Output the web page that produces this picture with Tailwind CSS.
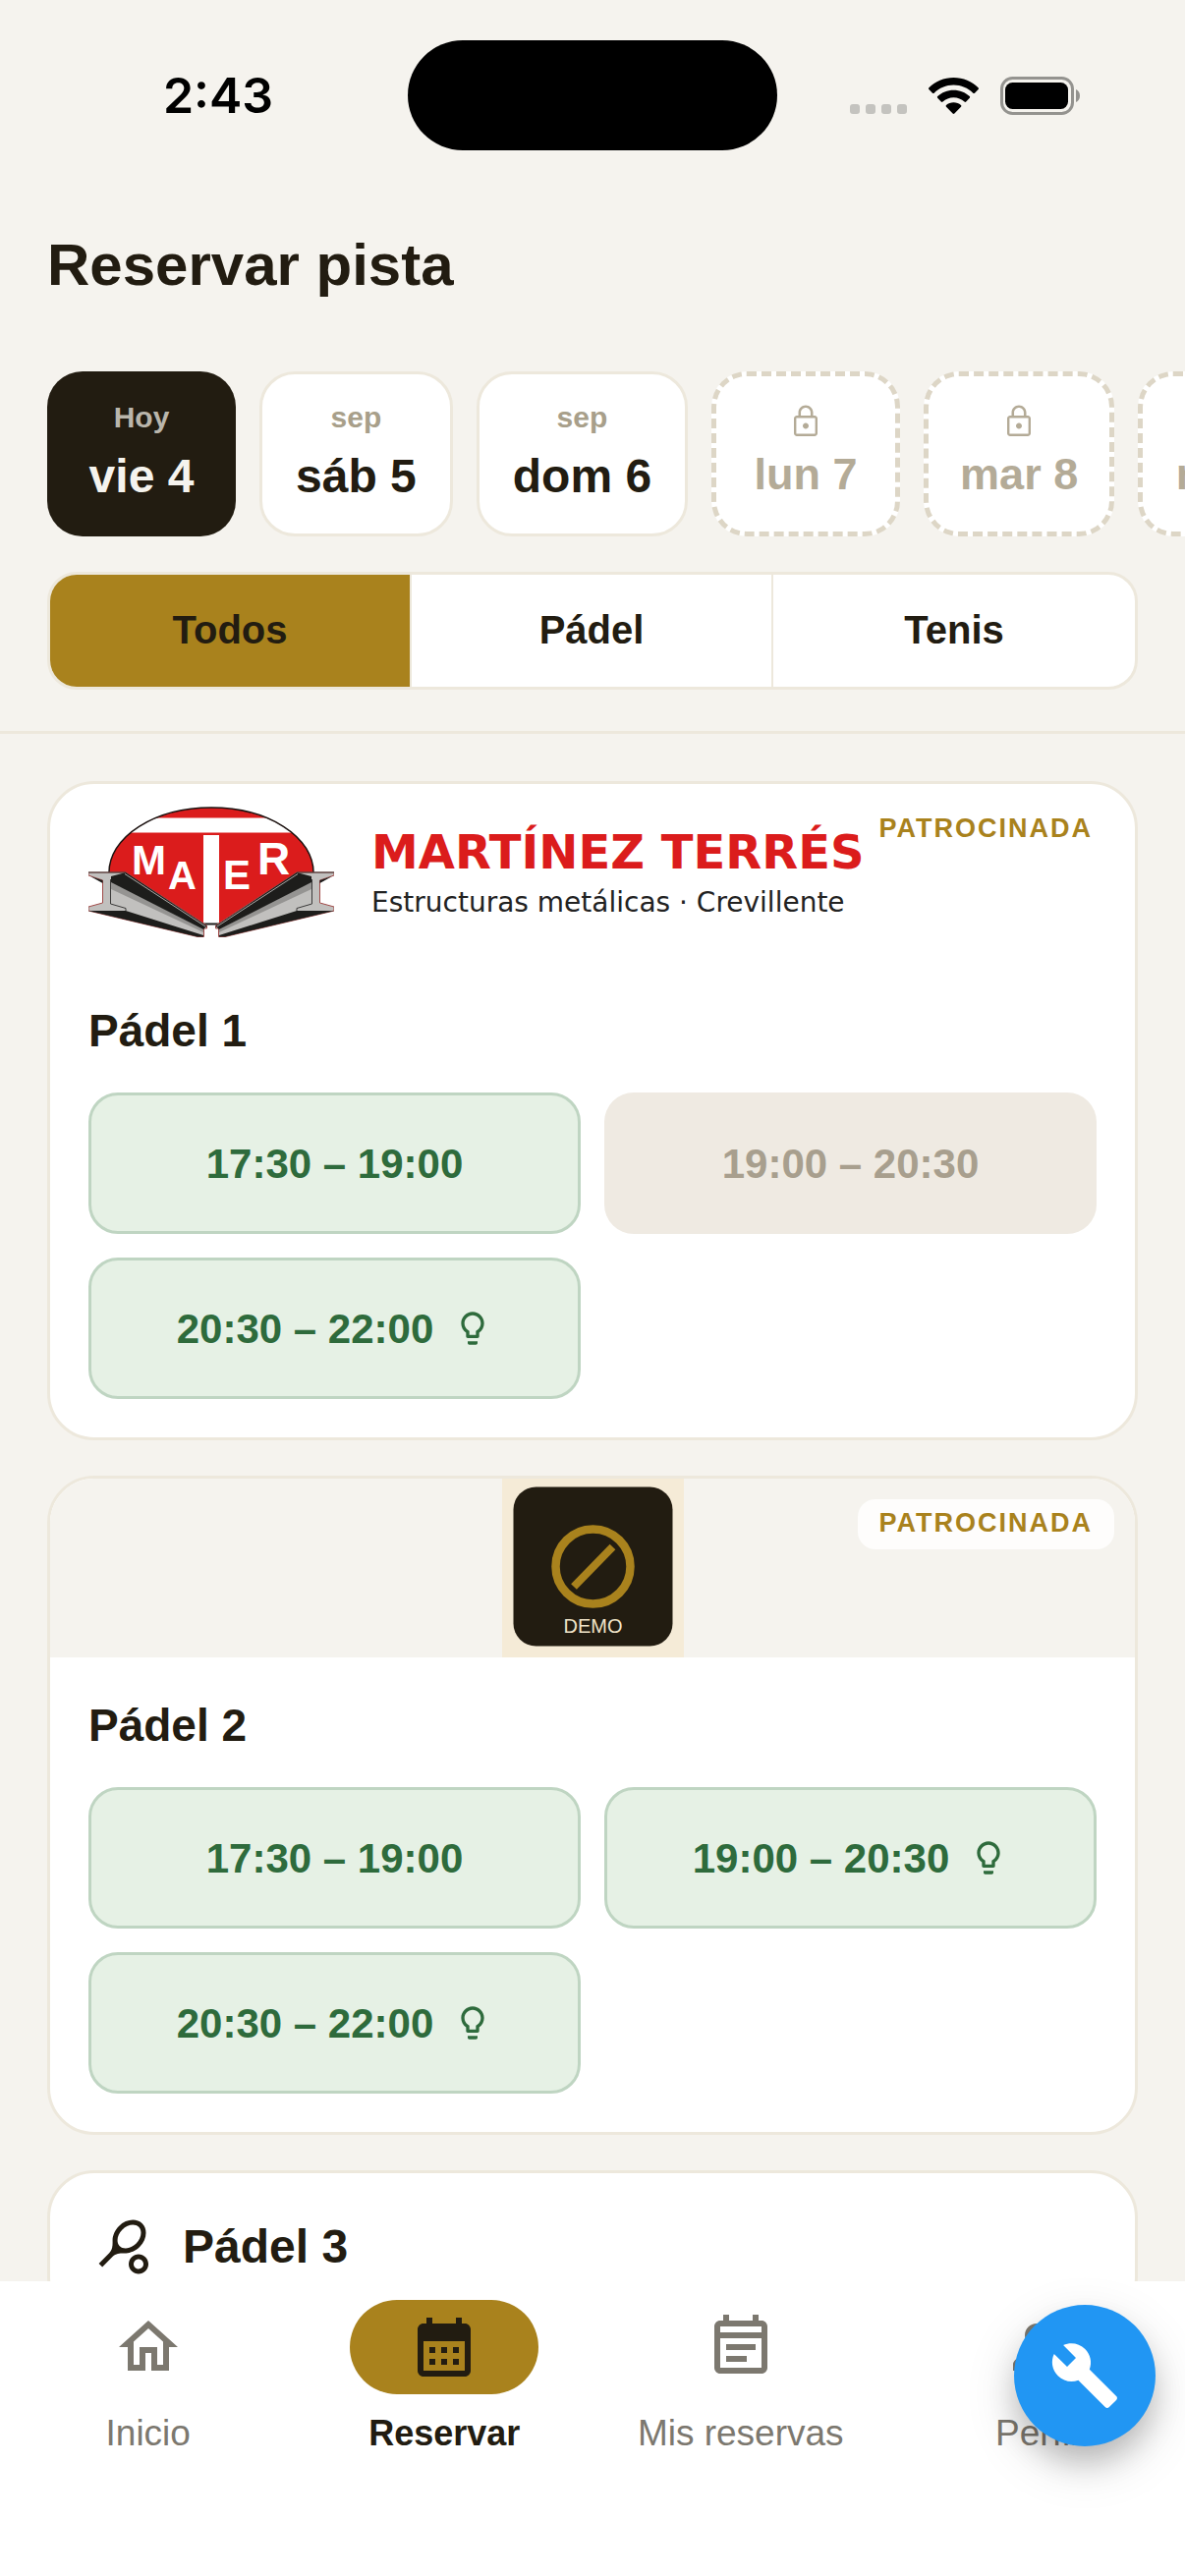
<!DOCTYPE html>
<html lang="es">
<head>
  <meta charset="UTF-8">
  <meta name="viewport" content="width=device-width, initial-scale=1.0">
  <title>Reservar pista</title>
  <script src="https://cdn.jsdelivr.net/npm/@tailwindcss/browser@4"></script>
</head>
<body class="bg-[#f5f3ee] font-['Liberation_Sans',Arial,sans-serif] text-[#221c11]">

  <!-- Shared icons -->
  <svg class="hidden">
    <symbol id="icon-lock" viewBox="0 0 24 24">
      <path fill-rule="evenodd" d="M18 8h-1V6c0-2.760-2.240-5-5-5S7 3.240 7 6v2H6c-1.100 0-2 .9-2 2v10c0 1.100.9 2 2 2h12c1.100 0 2-.9 2-2V10c0-1.100-.9-2-2-2zM8.700 6c0-1.800 1.500-3.300 3.300-3.300s3.300 1.500 3.300 3.300v2H8.700V6zM18.400 20.400H5.600V9.600h12.800v10.800zM12 17c1.100 0 2-.9 2-2s-.9-2-2-2-2 .9-2 2 .9 2 2 2z"/>
    </symbol>
    <symbol id="icon-bulb" viewBox="0 0 24 24">
      <path d="M9 21c0 .55.45 1 1 1h4c.55 0 1-.45 1-1v-1H9v1zm3-19C8.140 2 5 5.140 5 9c0 2.380 1.190 4.470 3 5.740V17c0 .55.45 1 1 1h6c.55 0 1-.45 1-1v-2.260c1.810-1.270 3-3.360 3-5.740 0-3.860-3.140-7-7-7zm2.850 11.100l-.85.6V16h-4v-2.300l-.85-.6C7.800 12.160 7 10.630 7 9c0-2.760 2.240-5 5-5s5 2.240 5 5c0 1.630-.8 3.160-2.150 4.100z"/>
    </symbol>
  </svg>

  <div class="flex h-screen flex-col">

    <header class="border-b-3 border-[#ede8dc] pb-[42px]">
      <!-- Status bar -->
      <div class="grid h-[192px] grid-cols-3 items-start pt-[41px]">
        <div class="flex h-[112px] items-center justify-center pl-[42px] font-['Inter',sans-serif] text-[50px] font-semibold text-black">2:43</div>
        <div class="h-[112px] w-[376px] justify-self-center rounded-full bg-black"></div>
        <div class="flex h-[112px] items-center justify-end gap-[22px] pr-[106px]">
          <div class="flex gap-1.5 pt-7">
            <span class="h-2.5 w-2.5 rounded-[3px] bg-[#c4c3bf]"></span>
            <span class="h-2.5 w-2.5 rounded-[3px] bg-[#c4c3bf]"></span>
            <span class="h-2.5 w-2.5 rounded-[3px] bg-[#c4c3bf]"></span>
            <span class="h-2.5 w-2.5 rounded-[3px] bg-[#c4c3bf]"></span>
          </div>
          <svg class="h-[37px] w-[51px]" viewBox="0 0 51 37">
            <path d="M25.500 0C35.300 0 44.300 3.900 50.600 10.300c.5.500.5 1.200 0 1.700l-3.600 3.700c-.5.500-1.200.5-1.700 0C40.100 10.700 33.100 7.600 25.500 7.600S10.900 10.700 5.700 15.700c-.5.500-1.200.5-1.700 0L.4 12c-.5-.5-.5-1.200 0-1.700C6.700 3.900 15.700 0 25.500 0z"/>
            <path d="M25.500 12.700c6.300 0 12 2.400 16.300 6.400.5.500.5 1.200 0 1.700l-3.600 3.700c-.5.500-1.200.5-1.700 0-2.900-2.700-6.800-4.300-11-4.300s-8.100 1.600-11 4.300c-.5.500-1.200.5-1.700 0l-3.600-3.700c-.5-.5-.5-1.200 0-1.700 4.300-4 10-6.400 16.300-6.400z"/>
            <path d="M25.500 25.300c2.900 0 5.500 1 7.500 2.700.5.500.5 1.200 0 1.700l-6.600 6.800c-.5.500-1.300.5-1.800 0L18 29.700c-.5-.5-.5-1.200 0-1.700 2-1.700 4.600-2.700 7.500-2.700z"/>
          </svg>
          <svg class="h-[39px] w-[82px]" viewBox="0 0 82 39">
            <rect x="1.500" y="1.500" width="72" height="36" rx="11" fill="none" stroke="#94938f" stroke-width="3"/>
            <rect x="5" y="6" width="64" height="27" rx="7.500"/>
            <path d="M77 13c2.500 1 4 3.500 4 6.500s-1.500 5.500-4 6.500z" fill="#94938f"/>
          </svg>
        </div>
      </div>

      <h1 class="mt-[42px] px-12 text-[60px] leading-[72px] font-bold">Reservar pista</h1>

      <!-- Days -->
      <div class="mt-[72px] flex gap-6 overflow-hidden pl-12">
        <button class="flex h-[168px] min-w-48 shrink-0 flex-col items-center justify-center gap-3 rounded-[36px] bg-[#221c11] px-9 pb-0.5 font-bold">
          <span class="text-[30px] leading-9 text-[#bab6ac]">Hoy</span>
          <span class="text-5xl leading-[60px] text-[#f5f3ee]">vie 4</span>
        </button>
        <button class="flex h-[168px] min-w-48 shrink-0 flex-col items-center justify-center gap-3 rounded-[36px] border-3 border-[#ede8dc] bg-white px-[34px] pb-0.5 font-bold">
          <span class="text-[30px] leading-9 text-[#a89f8a]">sep</span>
          <span class="text-5xl leading-[60px]">sáb 5</span>
        </button>
        <button class="flex h-[168px] min-w-48 shrink-0 flex-col items-center justify-center gap-3 rounded-[36px] border-3 border-[#ede8dc] bg-white px-[34px] pb-0.5 font-bold">
          <span class="text-[30px] leading-9 text-[#a89f8a]">sep</span>
          <span class="text-5xl leading-[60px]">dom 6</span>
        </button>
        <button class="flex h-[168px] min-w-48 shrink-0 flex-col items-center justify-center gap-1.5 rounded-[36px] border-[5px] border-dashed border-[#ddd6c6] bg-white px-8 font-bold text-[#b4ab97]">
          <svg class="h-9 w-9 fill-current"><use href="#icon-lock"/></svg>
          <span class="text-[45px] leading-[60px]">lun 7</span>
        </button>
        <button class="flex h-[168px] min-w-48 shrink-0 flex-col items-center justify-center gap-1.5 rounded-[36px] border-[5px] border-dashed border-[#ddd6c6] bg-white px-8 font-bold text-[#b4ab97]">
          <svg class="h-9 w-9 fill-current"><use href="#icon-lock"/></svg>
          <span class="text-[45px] leading-[60px]">mar 8</span>
        </button>
        <button class="flex h-[168px] min-w-48 shrink-0 flex-col items-center justify-center gap-1.5 rounded-[36px] border-[5px] border-dashed border-[#ddd6c6] bg-white px-8 font-bold text-[#b4ab97]">
          <svg class="h-9 w-9 fill-current"><use href="#icon-lock"/></svg>
          <span class="text-[45px] leading-[60px]">mié 9</span>
        </button>
      </div>

      <!-- Sport filter -->
      <div class="mx-12 mt-9 grid h-[120px] grid-cols-3 overflow-hidden rounded-[30px] border-3 border-[#ede8dc] bg-white text-[40px] font-bold">
        <button class="border-r-2 border-[#ede8dc] bg-[#a9821d] pb-0.5">Todos</button>
        <button class="border-r-2 border-[#ede8dc] pb-0.5">Pádel</button>
        <button class="pb-0.5">Tenis</button>
      </div>
    </header>

    <!-- Courts -->
    <main class="flex min-h-0 flex-1 flex-col gap-9 overflow-hidden px-12 pt-12">

      <section class="relative shrink-0 overflow-hidden rounded-[48px] border-3 border-[#ede8dc] bg-white">
        <div class="flex h-[182px] items-center gap-[38px] px-[39px] pb-1">
          <svg class="h-[133px] w-[250px] shrink-0" viewBox="0 0 250 133">
            <path d="M21 78V67A104 66 0 0 1 229 67V78L133 120H118Z" fill="#db1c1c"/>
            <path d="M69 11.500H181A104 66 0 0 1 207 26.500H43A104 66 0 0 1 69 11.500Z" fill="#fff"/>
            <path d="M21 72V67A104 66 0 0 1 229 67V72" fill="none" stroke="#1a1210" stroke-width="1.500"/>
            <rect x="117" y="29" width="16" height="90" fill="#fff"/>
            <g fill="#fff" font-family="'Liberation Sans',sans-serif" font-weight="bold">
              <text x="44" y="69" font-size="42">M</text>
              <text x="81" y="84" font-size="40">A</text>
              <text x="137" y="84" font-size="42">E</text>
              <text x="172" y="69" font-size="46">R</text>
            </g>
            <path d="M116 119.500h18" stroke="#1d1d1b" stroke-width="2"/>
            <g id="beam">
              <path d="M0 67H38L120.500 121V124H117.500V132.500H111L0 106V102L14.500 98V75L0 70Z" fill="#c1c0be" stroke="#a04a48" stroke-width="1"/>
              <path d="M23 76L117 125V128L23 84Z" fill="#959492"/>
              <path d="M23 71L38 67L120.500 121.500L117 125L23 77Z" fill="#1d1d1b"/>
              <path d="M37 68.500L119 122" stroke="#aaa9a7" stroke-width="1"/>
              <path d="M0 106H38L117 131V132.500H111ZM2 71L14.500 75V78Z" fill="#1d1d1b"/>
              <path d="M22.500 74V99L38 103.500V106M0 67H38" fill="none" stroke="#3b3a39" stroke-width="1"/>
            </g>
            <use href="#beam" transform="matrix(-1 0 0 1 250 0)"/>
          </svg>
          <div class="flex flex-col gap-1 font-['DejaVu_Sans',sans-serif]">
            <span class="text-5xl leading-[60px] font-bold text-[#db1c1c]">MARTÍNEZ TERRÉS</span>
            <span class="text-[28px] leading-9 text-[#222]">Estructuras metálicas · Crevillente</span>
          </div>
        </div>
        <span class="absolute top-[21px] right-[21px] rounded-[18px] bg-white/85 px-[22px] pt-2 pb-2.5 text-[27px] leading-[33px] font-bold tracking-[2px] text-[#a9821d]">PATROCINADA</span>
        <div class="px-[39px] pt-[39px] pb-[39px]">
          <h2 class="text-[46px] leading-[60px] font-bold">Pádel 1</h2>
          <div class="mt-[33px] grid grid-cols-2 gap-6 text-[42px] font-bold">
            <button class="flex h-36 items-center justify-center rounded-[30px] border-3 border-[#bfd5c2] bg-[#e6f1e5] text-[#2e6b3c]">17:30 – 19:00</button>
            <button class="flex h-36 items-center justify-center rounded-[30px] bg-[#efeae2] text-[#a89f8e]" disabled>19:00 – 20:30</button>
            <button class="flex h-36 items-center justify-center gap-5 rounded-[30px] border-3 border-[#bfd5c2] bg-[#e6f1e5] text-[#2e6b3c]">20:30 – 22:00 <svg class="h-10 w-10 fill-current"><use href="#icon-bulb"/></svg></button>
          </div>
        </div>
      </section>

      <section class="relative shrink-0 overflow-hidden rounded-[48px] border-3 border-[#ede8dc] bg-white">
        <div class="flex h-[182px] justify-center bg-[#f5f3ee]">
          <svg class="h-[182px] w-[185px]" viewBox="0 0 185 182">
            <rect width="185" height="182" fill="#f5ebd7"/>
            <rect x="11.500" y="8.500" width="162" height="162" rx="23" fill="#221c11"/>
            <circle cx="92.500" cy="89.500" r="38" fill="none" stroke="#a9821d" stroke-width="8.500"/>
            <path d="M73 110l39.500-40.500" stroke="#a9821d" stroke-width="8"/>
            <text x="92.500" y="157" text-anchor="middle" font-size="20" fill="#efe3c8" font-family="'Liberation Sans',sans-serif">DEMO</text>
          </svg>
        </div>
        <span class="absolute top-[21px] right-[21px] rounded-[18px] bg-white/85 px-[22px] pt-2 pb-2.5 text-[27px] leading-[33px] font-bold tracking-[2px] text-[#a9821d]">PATROCINADA</span>
        <div class="px-[39px] pt-[39px] pb-[39px]">
          <h2 class="text-[46px] leading-[60px] font-bold">Pádel 2</h2>
          <div class="mt-[33px] grid grid-cols-2 gap-6 text-[42px] font-bold">
            <button class="flex h-36 items-center justify-center rounded-[30px] border-3 border-[#bfd5c2] bg-[#e6f1e5] text-[#2e6b3c]">17:30 – 19:00</button>
            <button class="flex h-36 items-center justify-center gap-5 rounded-[30px] border-3 border-[#bfd5c2] bg-[#e6f1e5] text-[#2e6b3c]">19:00 – 20:30 <svg class="h-10 w-10 fill-current"><use href="#icon-bulb"/></svg></button>
            <button class="flex h-36 items-center justify-center gap-5 rounded-[30px] border-3 border-[#bfd5c2] bg-[#e6f1e5] text-[#2e6b3c]">20:30 – 22:00 <svg class="h-10 w-10 fill-current"><use href="#icon-bulb"/></svg></button>
          </div>
        </div>
      </section>

      <section class="shrink-0 rounded-[48px] border-3 border-[#ede8dc] bg-white px-[39px] pt-[39px] pb-[39px]">
        <div class="flex h-[72px] items-center gap-6">
          <span class="flex w-[72px] justify-center">
            <svg class="h-[60px] w-[60px] fill-current" viewBox="0 0 24 24">
              <path d="M19.520 2.490c-2.340-2.340-6.620-1.870-9.550 1.060-1.600 1.600-2.520 3.870-2.540 5.460-.02 1.580.26 3.890-1.350 5.500l-4.240 4.240 1.420 1.420 4.240-4.240c1.610-1.610 3.920-1.330 5.500-1.350s3.860-.94 5.460-2.540c2.920-2.930 3.400-7.210 1.060-9.550zm-9.200 9.190c-1.530-1.530-1.050-4.610 1.060-6.720s5.180-2.590 6.720-1.060c1.530 1.530 1.050 4.610-1.060 6.720s-5.180 2.590-6.720 1.060zM18 17c.53 0 1.040.21 1.410.59.78.78.78 2.050 0 2.830-.37.37-.88.58-1.410.58s-1.040-.21-1.410-.59c-.78-.78-.78-2.050 0-2.830.37-.37.88-.58 1.410-.58m0-2c-1.020 0-2.050.39-2.830 1.170-1.560 1.560-1.560 4.090 0 5.660.78.78 1.810 1.170 2.830 1.170s2.050-.39 2.830-1.170c1.560-1.560 1.560-4.090 0-5.660C20.050 15.390 19.020 15 18 15z"/>
            </svg>
          </span>
          <h2 class="text-5xl leading-[60px] font-bold">Pádel 3</h2>
        </div>
      </section>
    </main>

    <!-- Bottom navigation -->
    <nav class="relative grid h-[300px] shrink-0 grid-cols-4 items-start bg-white pt-[19px] text-[37px] leading-[48px] text-[#7c786f]">
      <a href="#" class="flex flex-col items-center gap-4">
        <span class="flex h-24 w-48 items-center justify-center">
          <svg class="h-[72px] w-[72px] fill-current" viewBox="0 0 24 24"><path d="M12 5.690l5 4.500V18h-2v-6H9v6H7v-7.810l5-4.500M12 3L2 12h3v8h6v-6h2v6h6v-8h3L12 3z"/></svg>
        </span>
        Inicio
      </a>
      <a href="#" class="flex flex-col items-center gap-4 text-4xl leading-[48px] font-bold text-[#221c11]">
        <span class="flex h-24 w-48 items-center justify-center rounded-full bg-[#a9821d]">
          <svg class="h-[72px] w-[72px] fill-current" viewBox="0 0 24 24"><path fill-rule="evenodd" d="M19 4h-1V2h-2v2H8V2H6v2H5c-1.110 0-2 .9-2 2v14c0 1.100.89 2 2 2h14c1.100 0 2-.9 2-2V6c0-1.100-.9-2-2-2zm0 16H5V10h14v10zM7 12h2v2H7zM11 12h2v2h-2zM15 12h2v2h-2zM7 16h2v2H7zM11 16h2v2h-2zM15 16h2v2h-2z"/></svg>
        </span>
        Reservar
      </a>
      <a href="#" class="flex flex-col items-center gap-4">
        <span class="flex h-24 w-48 items-center justify-center">
          <svg class="h-[72px] w-[72px] fill-current" viewBox="0 0 24 24"><path fill-rule="evenodd" d="M19 3h-1V1h-2v2H8V1H6v2H5c-1.110 0-2 .9-2 2v14c0 1.100.89 2 2 2h14c1.100 0 2-.9 2-2V5c0-1.100-.9-2-2-2zM5 5h14v2H5zM5 9h14v10H5zM7 11h10v2H7zM7 15h7v2H7z"/></svg>
        </span>
        Mis reservas
      </a>
      <a href="#" class="flex flex-col items-center gap-4">
        <span class="flex h-24 w-48 items-center justify-center">
          <svg class="h-[72px] w-[72px] fill-current" viewBox="0 0 24 24"><path d="M12 6c1.100 0 2 .9 2 2s-.9 2-2 2-2-.9-2-2 .9-2 2-2m0 10c2.700 0 5.800 1.290 6 2H6c.23-.72 3.310-2 6-2m0-12C9.790 4 8 5.790 8 8s1.790 4 4 4 4-1.790 4-4-1.790-4-4-4zm0 10c-2.670 0-8 1.340-8 4v2h16v-2c0-2.660-5.330-4-8-4z"/></svg>
        </span>
        Perfil
      </a>
      <button aria-label="Herramientas" class="absolute top-6 right-[30px] flex h-36 w-36 items-center justify-center rounded-full bg-[#2196f3] shadow-[0_18px_30px_-3px_rgba(0,0,0,0.2),0_18px_54px_0_rgba(0,0,0,0.14)]">
        <svg class="h-[72px] w-[72px] fill-white" viewBox="0 0 24 24"><path d="M22.700 19l-9.100-9.100c.9-2.300.4-5-1.500-6.900-2-2-5-2.400-7.400-1.300L9 6 6 9 1.600 4.700C.4 7.100.9 10.100 2.900 12.100c1.900 1.900 4.600 2.400 6.900 1.500l9.100 9.100c.4.400 1 .4 1.400 0l2.300-2.300c.5-.4.5-1.100.1-1.400z"/></svg>
      </button>
    </nav>
  </div>
</body>
</html>
